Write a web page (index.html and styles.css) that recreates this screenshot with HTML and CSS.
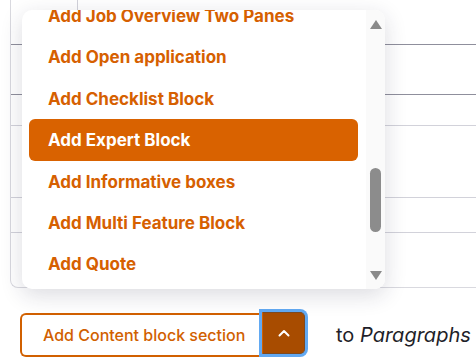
FILE: index.html
```html
<!DOCTYPE html>
<html lang="en">
<head>
  <meta charset="UTF-8" />
  <title>Paragraphs widget</title>
  <link rel="stylesheet" href="styles.css">
</head>
<body>

  <div class="table-card">
    <div class="row row-first"><div class="cell-handle"></div></div>
    <div class="row row-dark"></div>
    <div class="row"></div>
    <div class="row"></div>
    <div class="row"></div>
    <div class="row row-last"></div>
  </div>

  <div class="actions">
    <div class="split-button">
      <button class="split-main">Add Content block section</button>
      <button class="split-toggle" aria-label="More">
        <svg width="12" height="8" viewBox="0 0 12 8"><path d="M1.5 6.5 L6 2 L10.5 6.5" fill="none" stroke="#fff" stroke-width="2" stroke-linecap="round" stroke-linejoin="round"/></svg>
      </button>
    </div>
    <span class="to-label">to <em>Paragraphs</em></span>
  </div>

  <div class="dropdown">
    <ul class="dropdown-list">
      <li>Add Job Overview Two Panes</li>
      <li>Add Open application</li>
      <li>Add Checklist Block</li>
      <li class="active">Add Expert Block</li>
      <li>Add Informative boxes</li>
      <li>Add Multi Feature Block</li>
      <li>Add Quote</li>
    </ul>
    <div class="scrollbar">
      <span class="arrow arrow-up"></span>
      <span class="thumb"></span>
      <span class="arrow arrow-down"></span>
    </div>
  </div>

</body>
</html>
```

FILE: styles.css
```css
body {
  margin: 0;
  background: #fff;
  font-family: Inter, "Noto Sans", sans-serif;
  overflow: hidden;
  width: 476px;
  height: 362px;
  position: relative;
}

.table-card {
  margin-left: 10px;
  width: 520px;
  height: 288px;
  box-sizing: border-box;
  border-left: 1px solid #d9d9df;
  border-bottom: 1px solid #d9d9df;
  border-bottom-left-radius: 8px;
  display: flex;
  flex-direction: column;
}

.row {
  border-bottom: 1px solid #d2d2da;
  flex: none;
}

.row-first {
  height: 44px;
  border-bottom-color: #8f8f9c;
}

.cell-handle {
  width: 66px;
  height: 100%;
  border-right: 1px solid #d2d2da;
}

.row-dark {
  height: 49px;
  border-bottom-color: #8f8f9c;
}

.row:nth-child(3) { height: 30px; }
.row:nth-child(4) { height: 71px; }
.row:nth-child(5) { height: 34px; }

.row-last {
  flex: 1;
  border-bottom: none;
}

.actions {
  display: flex;
  align-items: center;
  margin-top: 25px;
  padding-left: 20px;
}

.split-button {
  display: flex;
  height: 44px;
}

.split-main {
  font-family: inherit;
  font-size: 16px;
  font-weight: 500;
  color: #d16000;
  background: #fff;
  border: 2px solid #d16000;
  border-right: none;
  border-radius: 6px 0 0 6px;
  padding: 0 10px 0 21px;
  width: 242px;
  text-align: left;
  white-space: nowrap;
}

.split-toggle {
  width: 43px;
  margin-top: -1px;
  height: 42px;
  background: #a84c00;
  border: 1px solid #7d4a22;
  border-left: 1px solid #d16000;
  border-radius: 0 5px 5px 0;
  box-shadow: 0 0 0 3px #62a9f2;
  display: flex;
  align-items: center;
  justify-content: center;
  padding: 0;
}

.to-label {
  margin-left: 31px;
  font-size: 20px;
  color: #1f1f29;
  white-space: nowrap;
}

.to-label em {
  font-style: italic;
}

/* open menu of the split button */
.dropdown {
  position: absolute;
  left: 22px;
  top: 10px;
  width: 363px;
  height: 279px;
  background: #fff;
  border-radius: 10px;
  box-shadow: 0 6px 22px rgba(30, 30, 60, 0.16);
  overflow: hidden;
  display: flex;
}

.dropdown-list {
  list-style: none;
  margin: -15px 0 0;
  padding: 0 8px 0 7px;
  width: 329px;
  flex: none;
}

.dropdown-list li {
  box-sizing: border-box;
  height: 41.4px;
  line-height: 39.4px;
  padding: 2px 0 0 19px;
  font-size: 17px;
  font-weight: 700;
  color: #d66000;
  border-radius: 6px;
  white-space: nowrap;
}

.dropdown-list li.active {
  background: #d96200;
  color: #fff;
}

.scrollbar {
  flex: 1;
  background: #fafafa;
  display: flex;
  flex-direction: column;
  align-items: center;
  padding: 10px 0 9px;
}

.arrow {
  width: 0;
  height: 0;
  border-left: 6px solid transparent;
  border-right: 6px solid transparent;
}

.arrow-up {
  border-bottom: 9px solid #8a8a8a;
}

.arrow-down {
  margin-top: auto;
  border-top: 9px solid #8a8a8a;
}

.thumb {
  width: 11px;
  height: 64px;
  margin-top: 139px;
  border-radius: 6px;
  background: #8c8c8c;
}
```
